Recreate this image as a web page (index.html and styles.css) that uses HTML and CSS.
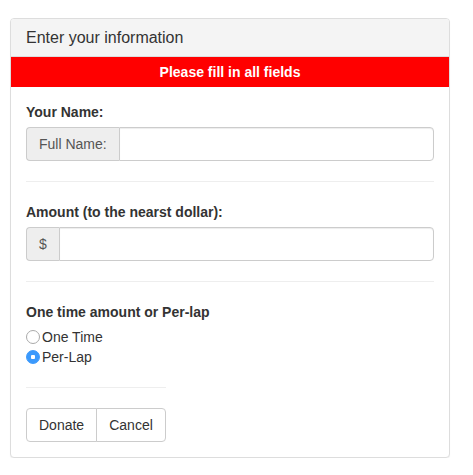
FILE: index.html
```html
<!DOCTYPE html>
<html>
<head>
<meta charset="utf-8">
<link rel="stylesheet" href="styles.css">
</head>
<body>
<div class="panel">
  <div class="panel-heading"><h3 class="panel-title">Enter your information</h3></div>
  <div class="alert">Please fill in all fields</div>
  <div class="panel-body">
    <div class="form-group">
      <label class="label">Your Name:</label>
      <div class="input-group">
        <span class="addon">Full Name:</span>
        <input class="control" type="text">
      </div>
    </div>
    <hr class="sep">
    <div class="form-group">
      <label class="label">Amount (to the nearst dollar):</label>
      <div class="input-group">
        <span class="addon">$</span>
        <input class="control" type="text">
      </div>
    </div>
    <hr class="sep">
    <div class="form-group">
      <label class="label">One time amount or Per-lap</label>
      <label class="radio"><input type="radio" name="t"> One Time</label>
      <label class="radio"><input type="radio" name="t" checked> Per-Lap</label>
    </div>
    <div class="actions">
      <hr class="sep">
      <div class="btn-group">
        <button class="btn">Donate</button>
        <button class="btn">Cancel</button>
      </div>
    </div>
  </div>
</div>
</body>
</html>
```
FILE: styles.css
```css
* { box-sizing: border-box; }
body {
  margin: 0;
  padding: 18px 23px 0 10px;
  font-family: "Liberation Sans", Arial, sans-serif;
  font-size: 14px;
  line-height: 20px;
  color: #333;
  background: #fff;
}
.panel {
  width: 440px;
  border: 1px solid #ddd;
  border-radius: 4px;
  background: #fff;
  box-shadow: 0 1px 1px rgba(0,0,0,0.05);
}
.panel-heading {
  background: #f4f4f4;
  border-bottom: 1px solid #ddd;
  border-radius: 3px 3px 0 0;
  padding: 10px 15px;
}
.panel-title {
  margin: 0;
  font-size: 16px;
  line-height: 17px;
  font-weight: normal;
  color: #333;
}
.alert {
  background: #ff0000;
  color: #fff;
  font-weight: bold;
  font-size: 14px;
  text-align: center;
  height: 30px;
  line-height: 30px;
}
.panel-body {
  padding: 15px;
}
.label {
  display: block;
  font-weight: bold;
  margin-bottom: 5px;
}
.input-group {
  display: flex;
  height: 34px;
}
.addon {
  padding: 6px 12px;
  background: #eee;
  border: 1px solid #ccc;
  border-right: 0;
  border-radius: 4px 0 0 4px;
  color: #555;
  font-size: 14px;
  line-height: 20px;
}
.control {
  flex: 1;
  height: 34px;
  border: 1px solid #ccc;
  border-radius: 0 4px 4px 0;
  box-shadow: inset 0 1px 1px rgba(0,0,0,0.075);
  font: inherit;
  padding: 6px 12px;
  margin: 0;
}
.sep {
  margin: 20px 0;
  border: 0;
  border-top: 1px solid #eee;
}
.radio {
  display: flex;
  align-items: center;
  height: 20px;
  font-weight: normal;
}
.radio input {
  appearance: none;
  -webkit-appearance: none;
  width: 14px;
  height: 14px;
  margin: 0 2px 0 0;
  border: 1px solid #aaa;
  border-radius: 50%;
  background: #fff;
}
.radio input:checked {
  border-color: #3b99fc;
  background: radial-gradient(circle, #fff 0 2px, #3b99fc 2.5px);
}
.actions {
  display: inline-block;
  width: 140px;
}
.btn-group {
  display: flex;
}
.btn {
  font: inherit;
  color: #333;
  background: #fff;
  border: 1px solid #ccc;
  height: 34px;
  padding: 6px 12px;
  margin: 0;
}
.btn:first-child {
  border-radius: 4px 0 0 4px;
  width: 71px;
}
.btn:last-child {
  border-radius: 0 4px 4px 0;
  margin-left: -1px;
  width: 70px;
}
```
